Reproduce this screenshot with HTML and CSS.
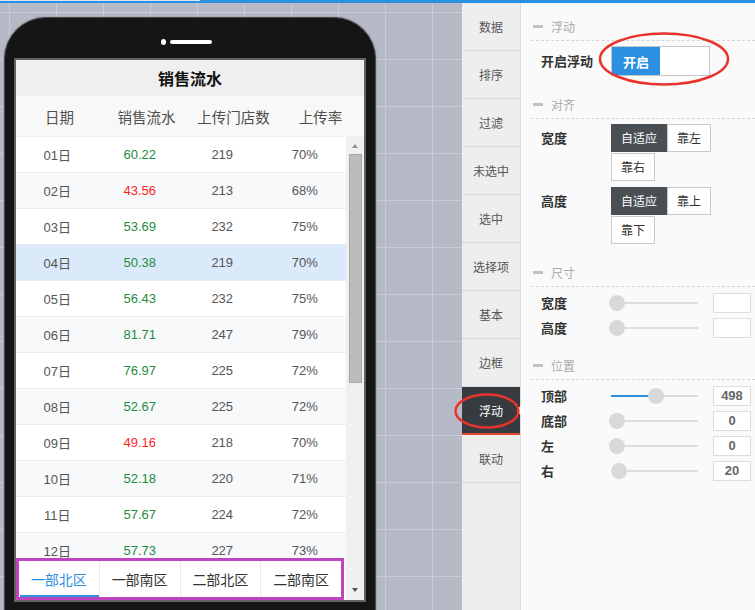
FILE: index.html
```html
<!DOCTYPE html>
<html lang="zh-CN">
<head>
<meta charset="utf-8">
<title>销售流水 - 浮动</title>
<link rel="stylesheet" href="styles.css">
</head>
<body>
<div class="topbar"><span class="topbar-seg"></span></div>
<div class="main">
  <div class="canvas">
    <div class="phone">
      <div class="speaker"><span class="cam"></span><span class="grill"></span></div>
      <div class="screen">
        <div class="title">销售流水</div>
        <div class="thead"><span>日期</span><span>销售流水</span><span>上传门店数</span><span>上传率</span></div>
        <div class="tbody">
          <div class="rows">
            <div class="row"><span>01日</span><span class="up">60.22</span><span>219</span><span>70%</span></div>
            <div class="row"><span>02日</span><span class="down">43.56</span><span>213</span><span>68%</span></div>
            <div class="row"><span>03日</span><span class="up">53.69</span><span>232</span><span>75%</span></div>
            <div class="row sel"><span>04日</span><span class="up">50.38</span><span>219</span><span>70%</span></div>
            <div class="row"><span>05日</span><span class="up">56.43</span><span>232</span><span>75%</span></div>
            <div class="row"><span>06日</span><span class="up">81.71</span><span>247</span><span>79%</span></div>
            <div class="row"><span>07日</span><span class="up">76.97</span><span>225</span><span>72%</span></div>
            <div class="row"><span>08日</span><span class="up">52.67</span><span>225</span><span>72%</span></div>
            <div class="row"><span>09日</span><span class="down">49.16</span><span>218</span><span>70%</span></div>
            <div class="row"><span>10日</span><span class="up">52.18</span><span>220</span><span>71%</span></div>
            <div class="row"><span>11日</span><span class="up">57.67</span><span>224</span><span>72%</span></div>
            <div class="row"><span>12日</span><span class="up">57.73</span><span>227</span><span>73%</span></div>
            <div class="row"></div>
          </div>
          <div class="scrollbar"><i class="arr-up"></i><i class="thumb"></i><i class="arr-down"></i></div>
        </div>
        <div class="tabs">
          <span class="tab active">一部北区</span>
          <span class="tab">一部南区</span>
          <span class="tab">二部北区</span>
          <span class="tab">二部南区</span>
        </div>
      </div>
    </div>
  </div>
  <div class="sidetabs">
    <div class="stab">数据</div>
    <div class="stab">排序</div>
    <div class="stab">过滤</div>
    <div class="stab">未选中</div>
    <div class="stab">选中</div>
    <div class="stab">选择项</div>
    <div class="stab">基本</div>
    <div class="stab">边框</div>
    <div class="stab active">浮动</div>
    <div class="stab">联动</div>
  </div>
  <div class="props">
    <div class="sec-head"><i class="dash"></i>浮动</div>
    <div class="prow toggle-row">
      <span class="plabel">开启浮动</span>
      <div class="toggle"><span class="on">开启</span><span class="off"></span></div>
    </div>

    <div class="sec-head gap"><i class="dash"></i>对齐</div>
    <div class="prow btn-row">
      <span class="plabel">宽度</span>
      <div class="btns"><span class="btn act">自适应</span><span class="btn">靠左</span><span class="btn">靠右</span></div>
    </div>
    <div class="prow btn-row second">
      <span class="plabel">高度</span>
      <div class="btns"><span class="btn act">自适应</span><span class="btn">靠上</span><span class="btn">靠下</span></div>
    </div>

    <div class="sec-head gap"><i class="dash"></i>尺寸</div>
    <div class="srows">
      <div class="srow"><span class="plabel">宽度</span><div class="slider"><i class="track"></i><i class="knob" style="left:0px"></i></div><span class="num"></span></div>
      <div class="srow"><span class="plabel">高度</span><div class="slider"><i class="track"></i><i class="knob" style="left:0px"></i></div><span class="num"></span></div>
    </div>

    <div class="sec-head gap-s"><i class="dash"></i>位置</div>
    <div class="srows">
      <div class="srow"><span class="plabel">顶部</span><div class="slider"><i class="track"></i><i class="fill" style="width:45px"></i><i class="knob" style="left:39px"></i></div><span class="num">498</span></div>
      <div class="srow"><span class="plabel">底部</span><div class="slider"><i class="track"></i><i class="knob" style="left:0px"></i></div><span class="num">0</span></div>
      <div class="srow"><span class="plabel">左</span><div class="slider"><i class="track"></i><i class="knob" style="left:0px"></i></div><span class="num">0</span></div>
      <div class="srow"><span class="plabel">右</span><div class="slider"><i class="track"></i><i class="knob" style="left:2px"></i></div><span class="num">20</span></div>
    </div>
  </div>
</div>
<svg class="annot" width="755" height="610" viewBox="0 0 755 610">
  <ellipse cx="664" cy="59" rx="64" ry="25.5" fill="none" stroke="#e8332d" stroke-width="2.5"/>
  <ellipse cx="487" cy="411" rx="31.5" ry="16.5" fill="none" stroke="#e8332d" stroke-width="2.5"/>
</svg>
</body>
</html>
```
FILE: styles.css
```css
html, body {
  margin: 0;
  padding: 0;
}
body {
  width: 755px;
  height: 610px;
  overflow: hidden;
  position: relative;
  background: #fafafa;
  font-family: "Noto Sans CJK SC", "Liberation Sans", sans-serif;
}

/* top bar */
.topbar {
  height: 3px;
  background: #2b8fe2;
  position: relative;
}
.topbar-seg {
  display: block;
  width: 200px;
  height: 1px;
  background: #dfe4ec;
}

.main {
  display: flex;
  height: 607px;
}

/* canvas */
.canvas {
  width: 462px;
  flex: none;
  position: relative;
  overflow: hidden;
  background-color: #b6bac6;
  background-image:
    linear-gradient(to right, #c9ccd6 1px, transparent 1px),
    linear-gradient(to bottom, #c9ccd6 1px, transparent 1px);
  background-size: 47px 47px;
  background-position: 9px 9px;
}

.phone {
  position: absolute;
  left: 4px;
  top: 14px;
  width: 370px;
  height: 640px;
  background: #151515;
  border: 1px solid #4a4a4a;
  border-radius: 42px 42px 0 0;
  box-shadow: 0 0 2px rgba(0,0,0,0.35);
  padding-top: 21px;
  box-sizing: content-box;
}
.speaker {
  height: 6px;
  display: flex;
  justify-content: center;
  align-items: center;
  gap: 4px;
  margin-bottom: 13px;
  padding-right: 8px;
}
.cam {
  width: 5px;
  height: 6px;
  border-radius: 50%;
  background: #fff;
}
.grill {
  width: 42px;
  height: 4px;
  border-radius: 2px;
  background: #fff;
}

.screen {
  margin-left: 9px;
  width: 348px;
  height: 540px;
  border: 2px solid #626262;
  background: #fff;
  position: relative;
  overflow: hidden;
  display: flex;
  flex-direction: column;
}
.title {
  height: 36px;
  flex: none;
  background: #efefef;
  display: flex;
  align-items: center;
  justify-content: center;
  font-size: 16px;
  font-weight: bold;
  color: #111;
}
.thead {
  height: 40px;
  flex: none;
  background: #f8f8f8;
  border-bottom: 1px solid #efefef;
  display: grid;
  grid-template-columns: repeat(4, 1fr);
  align-items: center;
  text-align: center;
  font-size: 14.5px;
  color: #4f4f4f;
}
.tbody {
  flex: 1;
  display: flex;
  overflow: hidden;
}
.rows {
  flex: 1;
  overflow: hidden;
}
.row {
  height: 36px;
  box-sizing: border-box;
  border-bottom: 1px solid #e9ecef;
  display: grid;
  grid-template-columns: repeat(4, 1fr);
  align-items: center;
  text-align: center;
  font-family: "Liberation Sans", "Noto Sans CJK SC", sans-serif;
  font-size: 13px;
  color: #555;
  background: #fff;
}
.row:nth-child(even) {
  background: #f8f9fb;
}
.row.sel {
  background: #dbeafb;
}
.up { color: #1e8c3e; }
.down { color: #ff1f1f; }

.scrollbar {
  width: 18px;
  flex: none;
  background: #f0f0f0;
  display: flex;
  flex-direction: column;
  align-items: center;
}
.arr-up {
  margin-top: 7px;
  width: 0;
  height: 0;
  border-left: 3.5px solid transparent;
  border-right: 3.5px solid transparent;
  border-bottom: 4px solid #8f8f8f;
}
.thumb {
  margin-top: 6px;
  width: 11px;
  height: 227px;
  background: #bcbcbc;
  border: 1px solid #a8a8a8;
}
.arr-down {
  margin-top: auto;
  margin-bottom: 8px;
  width: 0;
  height: 0;
  border-left: 3.5px solid transparent;
  border-right: 3.5px solid transparent;
  border-top: 4px solid #555;
}

.tabs {
  position: absolute;
  left: 0;
  bottom: 0;
  width: 328px;
  height: 42px;
  box-sizing: border-box;
  border: 3px solid #bf44bf;
  background: #fff;
  display: flex;
}
.tab {
  flex: 1;
  display: flex;
  align-items: center;
  justify-content: center;
  font-size: 14px;
  color: #333;
  border-left: 1px solid #ebebeb;
  position: relative;
}
.tab:first-child {
  border-left: none;
}
.tab.active {
  color: #2b8fe2;
}
.tab.active::after {
  content: "";
  position: absolute;
  left: 1px;
  right: 0;
  bottom: 0;
  height: 2px;
  background: #2b8fe2;
}

/* side tabs */
.sidetabs {
  width: 58px;
  flex: none;
  background: #eeeeee;
  border-right: 1px solid #dcdcdc;
}
.stab {
  height: 47px;
  border-bottom: 1px solid #dadada;
  display: flex;
  align-items: center;
  justify-content: center;
  font-size: 12px;
  color: #555;
  position: relative;
}
.stab.active {
  height: 46px;
  background: #363b3f;
  color: #fff;
  border-bottom: 2px solid #e4432e;
}
.stab.active::after {
  content: "";
  position: absolute;
  right: -4px;
  top: 20px;
  width: 7px;
  height: 7px;
  border-radius: 50%;
  background: #fff;
}

/* properties */
.props {
  flex: 1;
  background: #fafafa;
  padding: 9px 0 0 10px;
}
.sec-head {
  height: 28px;
  border-bottom: 1px dashed #d6d6d6;
  display: flex;
  align-items: center;
  font-size: 12px;
  color: #aaa;
}
.sec-head.gap { margin-top: 14px; }
.sec-head.gap-s { margin-top: 11px; }
.dash {
  width: 10px;
  height: 3px;
  background: #c2c2c2;
  margin: 0 8px 0 2px;
}
.prow {
  display: flex;
  padding-left: 10px;
}
.plabel {
  width: 70px;
  flex: none;
  font-size: 13px;
  font-weight: bold;
  color: #333;
  line-height: 28px;
}
.toggle-row {
  margin-top: 5px;
  height: 30px;
  align-items: center;
}
.toggle {
  width: 99px;
  height: 30px;
  box-sizing: border-box;
  border: 1px solid #c6c6c6;
  background: #fff;
  display: flex;
}
.toggle .on {
  width: 48px;
  background: #2b8fe2;
  color: #fff;
  font-size: 13px;
  font-weight: bold;
  display: flex;
  align-items: center;
  justify-content: center;
}
.btn-row {
  margin-top: 5px;
  align-items: flex-start;
}
.btn-row.second {
  margin-top: 6px;
}
.btns {
  width: 110px;
  display: flex;
  flex-wrap: wrap;
  row-gap: 1px;
}
.btn {
  height: 28px;
  box-sizing: border-box;
  border: 1px solid #c9c9c9;
  background: #fff;
  padding: 0 9px;
  font-size: 12px;
  line-height: 26px;
  color: #333;
}
.btn.act {
  background: #4a4f54;
  border-color: #4a4f54;
  color: #fff;
}
.srows {
  margin-top: 3px;
}
.srow {
  height: 25px;
  display: flex;
  align-items: center;
  padding-left: 10px;
}
.srow .plabel {
  width: 68px;
  line-height: 25px;
}
.slider {
  width: 89px;
  height: 16px;
  position: relative;
  flex: none;
}
.track {
  position: absolute;
  left: 2px;
  right: 0;
  top: 7px;
  height: 2px;
  background: #dddddd;
}
.fill {
  position: absolute;
  left: 2px;
  top: 7px;
  height: 2px;
  background: #2b8fe2;
}
.knob {
  position: absolute;
  top: 0;
  width: 16px;
  height: 16px;
  border-radius: 50%;
  background: #d9d9d9;
}
.num {
  margin-left: 15px;
  width: 38px;
  height: 20px;
  box-sizing: border-box;
  border: 1px solid #dcdcdc;
  background: #fff;
  font-family: "Liberation Sans", sans-serif;
  font-size: 13px;
  font-weight: bold;
  color: #666;
  text-align: center;
  line-height: 18px;
}

.annot {
  position: absolute;
  left: 0;
  top: 0;
  pointer-events: none;
}
```
